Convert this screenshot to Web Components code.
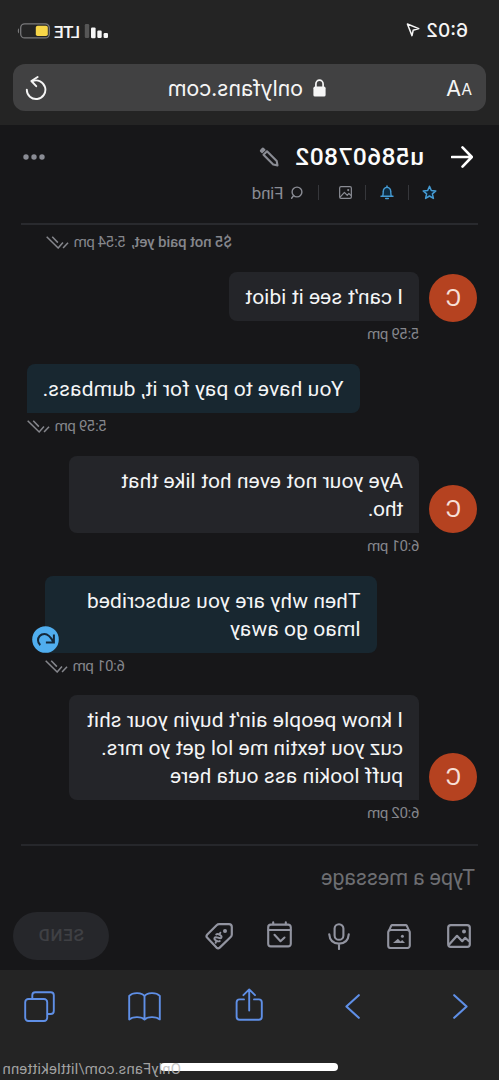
<!DOCTYPE html>
<html lang="en">
<head>
<meta charset="utf-8">
<title>Messages</title>
<style>
html,body{margin:0;height:100%;background:#171719;overflow:hidden}
</style>
</head>
<body>
<phone-screen></phone-screen>
<script>
const ICONS = {
  locate:[14,14,'<path d="M1.2 5.600 12.600 1 8 12.600 6.800 7.200Z" fill="none" stroke="currentColor" stroke-width="1.500" stroke-linejoin="round" transform="matrix(1 0 0 1 0 0)"/>'],
  signal:[24,16,'<g fill="currentColor"><rect x="0" y="10" width="4.4" height="5" rx="1.2"/><rect x="6.3" y="7.6" width="4.4" height="7.4" rx="1.2"/><rect x="12.4" y="4.4" width="4.6" height="10.8" rx="1.2"/><rect x="18.8" y="1" width="4.4" height="14" rx="1.2" opacity=".24"/></g>'],
  battery:[33,16,'<rect x=".7" y=".9" width="28.6" height="14" rx="4" fill="none" stroke="#79797b" stroke-width="1.3"/><rect x="2.2" y="2.7" width="12" height="10.4" rx="1.8" fill="#f7d648"/><path d="M31 5.3c1.6.8 1.6 4.4 0 5.2Z" fill="#79797b"/>'],
  lock:[13,18,'<rect x=".4" y="7.6" width="12.2" height="10" rx="1.6" fill="currentColor"/><path d="M2.9 8V5a3.6 3.9 0 0 1 7.2 0v3" fill="none" stroke="currentColor" stroke-width="1.7"/>'],
  reload:[22,25,'<g fill="none" stroke="currentColor" stroke-width="1.9" stroke-linecap="round" stroke-linejoin="round"><path d="M20.2 13.6A9.3 9.3 0 1 1 14.6 5.2"/><path d="M9.4 1 15.6 5 10.8 10.2" transform="rotate(0)"/></g>'],
  back:[22,22,'<path d="M21 11H2M10.5 1.4 1.2 11l9.3 9.6" fill="none" stroke="currentColor" stroke-width="2.6" stroke-linecap="round" stroke-linejoin="round"/>'],
  pencil:[20,20,'<path d="M2.300 14 12 4.300l3.500 3.500L5.800 17.500l-4.300.900Z" fill="none" stroke="currentColor" stroke-width="2.100" stroke-linejoin="round"/><path d="m13.200 2.900 1.600-1.600a1.800 1.800 0 0 1 2.600 0l1.100 1.100a1.800 1.800 0 0 1 0 2.600l-1.600 1.600Z" fill="currentColor"/>'],
  dots:[22,6,'<g fill="currentColor"><circle cx="3" cy="3" r="2.7"/><circle cx="11" cy="3" r="2.7"/><circle cx="19" cy="3" r="2.7"/></g>'],
  star:[15,15,'<path d="m7.5 1.3 1.8 4.2 4.5.4-3.4 3 1 4.5-3.9-2.4-3.9 2.4 1-4.5-3.4-3 4.5-.4Z" fill="#0d2233" stroke="currentColor" stroke-width="1.5" stroke-linejoin="round"/>'],
  bell:[14,15,'<path d="M1 11.3h12M2.6 11.2c.7-1.6.5-3.2.7-5A3.7 3.7 0 0 1 7 2.4a3.7 3.7 0 0 1 3.7 3.8c.2 1.8 0 3.4.7 5" fill="#0d2c42" stroke="currentColor" stroke-width="1.4" stroke-linecap="round"/><path d="M7 2.4V1M5.7 13.5h2.6" stroke="currentColor" stroke-width="1.5" stroke-linecap="round"/>'],
  photo:[24,24,'<g fill="none" stroke="currentColor" stroke-width="2.2" stroke-linejoin="round"><rect x="1.2" y="1.2" width="21.6" height="21.6" rx="2.6"/><path d="m1.8 17.500 4-3.700 3 3.400 5.200-5.400L22.300 21"/></g><circle cx="7" cy="7.500" r="2" fill="currentColor"/>'],
  search:[13,14,'<circle cx="7" cy="6" r="4.9" fill="none" stroke="currentColor" stroke-width="1.4"/><path d="m10.4 9.600 2 2.600" stroke="currentColor" stroke-width="1.500" stroke-linecap="round"/>'],
  ticks:[24,14,'<path d="m1 7 5.200 5.500M6.300 6.800l5 5.700L23.300.8M17.500.8 11.600 6.900" fill="none" stroke="currentColor" stroke-width="1.600"/>'],
  retry:[27,27,'<circle cx="13.5" cy="13.5" r="13.3" fill="#50aeef"/><path d="M5.1 8.6v8h8M5.6 16C8 11.5 10.5 8 14.5 8c4.3 0 6.5 3.3 6.5 6.3 0 2-.8 3.6-2.3 4.8" fill="none" stroke="#14283a" stroke-width="2"/>'],
  vault:[24,25,'<g fill="none" stroke="currentColor" stroke-width="2.1" stroke-linejoin="round"><rect x="1.2" y="6" width="21.6" height="18" rx="2.6"/><path d="M2 6.6 4.2 1.7Q4.5 1.1 5.3 1.1h13.4q.8 0 1.1.6L22 6.6"/></g><path d="m6 19 2.800-3 1.700 1.500 2.600-2.800L18 19Z" fill="currentColor"/><circle cx="8.600" cy="12.200" r="1.500" fill="currentColor"/>'],
  mic:[22,27,'<g fill="none" stroke="currentColor" stroke-width="2.1" stroke-linecap="round"><rect x="6.6" y="1.2" width="8.8" height="15.6" rx="4.4"/><path d="M1.2 11.2c.5 6.2 4.3 9.4 9.8 9.4s9.3-3.2 9.8-9.4M11 21v5"/></g>'],
  calendar:[25,27,'<g fill="none" stroke="currentColor" stroke-width="2.1" stroke-linecap="round" stroke-linejoin="round"><rect x="1.2" y="3.6" width="22.6" height="21.8" rx="2.6"/><path d="M1.5 9h22M6.2 3.200V1.200M18.800 3.200V1.200M7.500 16.500l4 3.700 6-6.400"/></g>'],
  tag:[28,27,'<path d="M4 1.200h9.800q1.500 0 2.600 1l9.300 9.300q1.600 1.700 0 3.300L16.500 24.600q-1.600 1.500-3.200 0L2.300 14q-1.100-1.100-1.100-2.600V4q0-2.800 2.800-2.800Z" fill="none" stroke="currentColor" stroke-width="2.200" stroke-linejoin="round"/><circle cx="8" cy="7.900" r="2" fill="currentColor"/><g transform="translate(15 14.700) rotate(-25)" fill="none" stroke="currentColor" stroke-width="1.900" stroke-linecap="round"><path d="M3-2.200Q2.300-3.500 0-3.500-3-3.400-3-1.600-3-.2 0 0 3 .2 3 1.700 3 3.500 0 3.500-2.300 3.500-3 2.200M0-5.600v2M0 3.600v2"/></g>'],
  prev:[15,25,'<path d="M13.8 1.2 1.4 12.5l12.4 11.3" fill="none" stroke="currentColor" stroke-width="2.1" stroke-linecap="round" stroke-linejoin="round"/>'],
  next:[15,25,'<path d="m1.2 1.2 12.4 11.3L1.2 23.8" fill="none" stroke="currentColor" stroke-width="2.1" stroke-linecap="round" stroke-linejoin="round"/>'],
  share:[28,34,'<path d="M9 11.4H4.2q-3 0-3 3v14.4q0 3 3 3h19.2q3 0 3-3V14.4q0-3-3-3H19M13.8 22.5V1.5M8 7.2l5.8-5.8 5.8 5.8" fill="none" stroke="currentColor" stroke-width="1.9" stroke-linecap="round" stroke-linejoin="round"/>'],
  book:[33,29,'<path d="M16.5 4.2C14 .4 5 0 1.2 3.8v23.6c4-3.2 12.500-2.800 15.300.2 2.800-3 11.300-3.400 15.300-.2V3.800C28 0 19 .4 16.500 4.200v23.200" fill="none" stroke="currentColor" stroke-width="1.900" stroke-linejoin="round"/>'],
  tabs:[31,31,'<g fill="none" stroke="currentColor" stroke-width="1.900"><rect x="7.800" y="8" width="22" height="22" rx="3.200"/><path d="M7.800 23H4.200q-3 0-3-3V4.200q0-3 3-3h15.500q3 0 3 3V8"/></g>']
};

class UiIcon extends HTMLElement {
  connectedCallback() {
    const [w, h, body] = ICONS[this.getAttribute('name')];
    const size = +(this.getAttribute('size') || w);
    this.attachShadow({mode:'open'}).innerHTML =
      `<style>:host{display:block;flex:none;width:${size}px;height:${size*h/w}px}svg{display:block;width:100%;height:100%}</style>
      <svg viewBox="0 0 ${w} ${h}">${body}</svg>`;
  }
}
customElements.define('ui-icon', UiIcon);

/* A single line of text, tracked so that it fills the given width. */
class FitText extends HTMLElement {
  connectedCallback() {
    this.attachShadow({mode:'open'}).innerHTML =
      `<style>:host{display:block;flex:none;white-space:pre;width:${this.getAttribute('w')}px}span{display:inline-block;white-space:pre}</style><span><slot></slot></span>`;
    const span = this.shadowRoot.querySelector('span');
    const count = this.textContent.length;
    const gap = +this.getAttribute('w') - span.offsetWidth;
    span.style.letterSpacing = (gap / count).toFixed(3) + 'px';
  }
}
customElements.define('fit-text', FitText);

function define(name, html) {
  const template = document.createElement('template');
  template.innerHTML = html;
  customElements.define(name, class extends HTMLElement {
    connectedCallback() {
      if (this.shadowRoot) return;
      this.attachShadow({mode:'open'}).appendChild(template.content.cloneNode(true));
    }
  });
}

define('status-bar', `
<style>
:host{display:flex;box-sizing:border-box;height:64px;padding:19.500px 0 0 31px;font:500 19px/22px Inter,sans-serif;color:#f6f6f6;align-items:flex-start}
.loc{margin:3.500px 0 0 6px}.sig{margin:3.500px 0 0 298px}.lte{margin:1px 0 0 4px;font:500 17px/22px Roboto,sans-serif}.bat{margin:3.500px 0 0 5px}
</style>
<fit-text w="42">6:02</fit-text><ui-icon class="loc" name="locate"></ui-icon>
<ui-icon class="sig" name="signal"></ui-icon><fit-text class="lte" w="25">LTE</fit-text><ui-icon class="bat" name="battery"></ui-icon>`);

define('address-bar', `
<style>
:host{display:flex;box-sizing:border-box;height:47px;margin:0 13px 14px;padding:0 12px 0 14px;border-radius:12px;background:#414142;color:#f5f5f5;font:400 21.500px/48px Inter,sans-serif}
.s{font-size:15.500px;padding-top:1.500px;width:11px}.b{width:15px;font-size:21.500px}.lock{margin:15px 0 0 120px}.url{margin-left:10px}.re{margin:12px 0 0 auto}
</style>
<span class="s">A</span><span class="b">A</span>
<ui-icon class="lock" name="lock"></ui-icon><fit-text class="url" w="135">onlyfans.com</fit-text>
<ui-icon class="re" name="reload"></ui-icon>`);

define('chat-header', `
<style>
:host{display:block;box-sizing:border-box;height:99.500px;margin:0 21px .500px;border-bottom:2px solid #292a2e;color:#8a8c94}
.top{display:flex;height:59px;padding:4px 2px 0 5px;align-items:center;box-sizing:border-box}
.name{margin-left:27px;font:500 24.500px/32px Roboto,sans-serif;color:#fcfcfc}.pen{margin-left:16px}.dots{margin-left:auto}
.back{color:#fff}
.tools{display:flex;align-items:center;height:17px;padding-left:40.500px;font:400 17px/18px Roboto,sans-serif}
i{width:1px;height:15px;background:#36373b;flex:none}
.blue{color:#459bd3}
</style>
<div class="top"><ui-icon class="back" name="back"></ui-icon><fit-text class="name" w="129">u58607802</fit-text><ui-icon class="pen" name="pencil"></ui-icon><ui-icon class="dots" name="dots"></ui-icon></div>
<div class="tools"><ui-icon class="blue" name="star"></ui-icon><i style="margin:0 14px 0 13.500px"></i><ui-icon class="blue" name="bell"></ui-icon><i style="margin:0 13px 0 13.500px"></i><ui-icon name="photo" size="13"></ui-icon><i style="margin:0 14px 0 20px"></i><ui-icon name="search"></ui-icon><fit-text style="margin-left:8px" w="32">Find</fit-text></div>`);

define('message-meta', `
<style>:host{display:flex;gap:5px;height:17px;font:400 15px/17px Roboto,sans-serif;color:#85868c}</style><slot></slot>`);

define('chat-message', `
<style>
:host{display:flex;align-items:flex-start;margin:0 27px 0 21.500px;gap:10.500px;color:#f4f5f6;--bg:#242529}
:host([mine]){justify-content:flex-end;--bg:#182730}
.avatar{width:48px;height:48px;border-radius:50%;background:#b54220;display:flex;align-items:center;justify-content:center;align-self:flex-start;font:400 24px/48px Roboto,sans-serif;color:#f7dfd6;margin-top:calc(var(--h) - 47.500px);flex:none}
:host([mine]) .avatar{display:none}
.col{position:relative;flex:none;margin-left:-.500px}
.bubble{box-sizing:border-box;width:var(--w);height:var(--h);padding:11px 16.500px 0;border-radius:8px 8px 8px 0;background:var(--bg);font:400 21px/28px Roboto,sans-serif}
:host([mine]) .bubble{border-radius:8px 8px 0 8px}
.meta{display:flex;margin:5px 0 20.800px}
:host([mine]) .meta{justify-content:flex-end}
::slotted(ui-icon[slot=badge]){position:absolute;right:-13px;top:50.500px}
</style>
<div class="avatar">C</div>
<div class="col"><div class="bubble"><slot></slot></div><slot name="badge"></slot><div class="meta"><slot name="meta"></slot></div></div>`);

define('chat-thread', `
<style>
:host{display:block;height:618.500px;overflow:hidden}
.first{display:flex;justify-content:flex-end;padding:9px 46px 21.300px 0}
b{font-weight:500}
</style>
<div class="first"><message-meta><fit-text w="101"><b>$5 not paid yet,</b></fit-text><fit-text w="52">5:54 pm</fit-text><ui-icon name="ticks" size="23" style="margin-top:2px"></ui-icon></message-meta></div>
<chat-message style="--w:190.500px;--h:49px"><fit-text w="158">I can’t see it idiot</fit-text><message-meta slot="meta"><fit-text w="52">5:59 pm</fit-text></message-meta></chat-message>
<chat-message mine style="--w:333px;--h:49px"><fit-text w="301">You have to pay for it, dumbass.</fit-text><message-meta slot="meta"><fit-text w="52">5:59 pm</fit-text><ui-icon name="ticks" size="23" style="margin-top:2px"></ui-icon></message-meta></chat-message>
<chat-message style="--w:350px;--h:77px"><fit-text w="282">Aye your not even hot like that</fit-text><fit-text w="35">tho.</fit-text><message-meta slot="meta"><fit-text w="52">6:01 pm</fit-text></message-meta></chat-message>
<chat-message mine style="--w:332px;--h:77px;margin-right:45px"><fit-text w="274">Then why are you subscribed</fit-text><fit-text w="131">lmao go away</fit-text><ui-icon slot="badge" name="retry"></ui-icon><message-meta slot="meta"><fit-text w="52">6:01 pm</fit-text><ui-icon name="ticks" size="23" style="margin-top:2px"></ui-icon></message-meta></chat-message>
<chat-message style="--w:350px;--h:105px"><fit-text w="316">I know people ain’t buyin your shit</fit-text><fit-text w="302">cuz you textin me lol get yo mrs.</fit-text><fit-text w="233">puff lookin ass outa here</fit-text><message-meta slot="meta"><fit-text w="52">6:02 pm</fit-text></message-meta></chat-message>`);

define('message-composer', `
<style>
:host{display:block;height:126px;color:#9294a0}
hr{margin:0 21px;border:0;height:2px;background:#26272b}
.input{padding:17px 0 0 24px;font:400 21.500px/30px Roboto,sans-serif;color:#6d6e72}
.row{display:flex;align-items:center;height:48px;margin:19.500px 13px 0 28px}
.send{margin-left:auto;width:96px;height:48px;border-radius:24px;background:#26272b;color:#3f4044;display:flex;justify-content:center;font:500 17px/47px Roboto,sans-serif}
</style>
<hr><div class="input"><fit-text w="154">Type a message</fit-text></div>
<div class="row"><ui-icon name="photo"></ui-icon><ui-icon name="vault" style="margin-left:36px"></ui-icon><ui-icon name="mic" style="margin-left:37px"></ui-icon><ui-icon name="calendar" style="margin-left:36px;margin-top:-3px"></ui-icon><ui-icon name="tag" style="margin-left:34px"></ui-icon><div class="send"><fit-text w="46">SEND</fit-text></div></div>`);

define('browser-toolbar', `
<style>
:host{display:block;position:relative;box-sizing:border-box;height:111px;background:#242424;color:#5f8fe6}
.row{display:flex;align-items:center;height:74px;padding-left:31px}
.home{width:178px;height:8px;border-radius:4px;background:#fff;margin:19px auto 0;position:relative;left:.500px}
.mark{position:absolute;left:318px;top:89px;font:400 15px/20px Roboto,sans-serif;color:rgba(185,185,185,.85)}
</style>
<div class="row"><ui-icon name="prev"></ui-icon><ui-icon name="next" style="margin-left:93px"></ui-icon><ui-icon name="share" style="margin:-3px 0 0 82px"></ui-icon><ui-icon name="book" style="margin-left:74px"></ui-icon><ui-icon name="tabs" style="margin-left:73px"></ui-icon></div>
<div class="home"></div><fit-text class="mark" w="179">OnlyFans.com/littlekittenn</fit-text>`);

define('phone-screen', `
<style>
:host{display:block;width:499px;height:1080px;background:#171719;transform:scaleX(-1);overflow:hidden}
.chrome{background:#242424;height:125px;display:flow-root}
</style>
<div class="chrome"><status-bar></status-bar><address-bar></address-bar></div>
<chat-header></chat-header><chat-thread></chat-thread><message-composer></message-composer><browser-toolbar></browser-toolbar>`);
</script>
</body>
</html>
